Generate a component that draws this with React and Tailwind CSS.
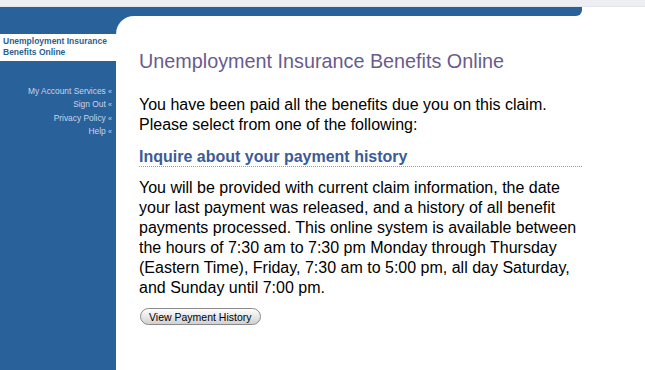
import React from "react";

const links = ["My Account Services", "Sign Out", "Privacy Policy", "Help"];

const paragraphLines = [
  "You will be provided with current claim information, the date",
  "your last payment was released, and a history of all benefit",
  "payments processed. This online system is available between",
  "the hours of 7:30 am to 7:30 pm Monday through Thursday",
  "(Eastern Time), Friday, 7:30 am to 5:00 pm, all day Saturday,",
  "and Sunday until 7:00 pm.",
];

const App = () => {
  return (
    <div className="w-[645px] h-[370px] overflow-hidden bg-white font-['Liberation_Sans',Arial,sans-serif] flex flex-col">
      {/* top strip */}
      <div className="h-[7px] shrink-0 bg-[#eceef2] border-b border-[#e2e6ec]"></div>

      <div className="flex flex-1 min-h-0">
        {/* sidebar */}
        <div className="w-[116px] shrink-0 bg-[#29619a] flex flex-col">
          <div className="mt-[27px] bg-white h-[27px] pl-[3px] pt-[2px] text-[8.5px] leading-[11px] font-bold text-[#2d5f92]">
            Unemployment Insurance
            <br />
            Benefits Online
          </div>
          <div className="mt-[24px] flex flex-col items-end pr-[4px] text-[8.4px] leading-[12.3px] text-[#c3d6ec]">
            {links.map((l) => (
              <span key={l}>
                {l} <span className="text-[7px]">«</span>
              </span>
            ))}
          </div>
        </div>

        {/* main column */}
        <div className="flex-1 flex flex-col bg-[linear-gradient(to_right,#29619a_24px,transparent_24px)]">
          <div className="h-[9px] w-[466px] shrink-0 bg-[#29619a] rounded-br-[6px]"></div>
          <div className="flex-1 bg-white rounded-tl-[18px] pl-[23px] pr-[63px] pt-[33px]">
            <h1 className="text-[19.8px] leading-[24px] text-[#6a5b8e]">
              Unemployment Insurance Benefits Online
            </h1>
            <p className="mt-[22px] text-[16px] leading-[20px] text-black">
              You have been paid all the benefits due you on this claim.
              <br />
              Please select from one of the following:
            </p>
            <h2 className="mt-[13px] text-[16px] leading-[18px] font-bold text-[#3c5b97] border-b border-dotted border-[#9a9a9a]">
              Inquire about your payment history
            </h2>
            <p className="mt-[11px] text-[16px] leading-[20px] text-black whitespace-nowrap">
              {paragraphLines.map((line, i) => (
                <span key={i} className="block">
                  {line}
                </span>
              ))}
            </p>
            <button className="mt-[10px] ml-[1px] h-[17px] px-[8px] rounded-full border border-[#8a8a8a] bg-[linear-gradient(to_bottom,#fdfdfd,#e4e4e4_60%,#d0d0d0)] text-[10.5px] leading-[14px] text-black">
              View Payment History
            </button>
          </div>
        </div>
      </div>
    </div>
  );
};

export default App;
